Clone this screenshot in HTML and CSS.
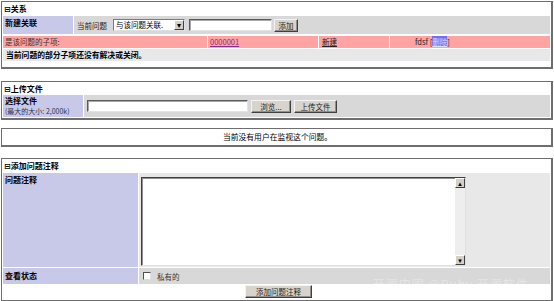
FILE: index.html
```html
<!DOCTYPE html>
<html>
<head>
<meta charset="utf-8">
<link rel="stylesheet" href="styles.css">
</head>
<body>
<div class="box s1">
  <div class="title">⊟关系</div>
  <div class="row r-new">
    <div class="label">新建关联</div>
    <div class="cell gray ctl">
      <span class="cur">当前问题</span>
      <span class="select"><span class="sel-text">与该问题关联.</span><span class="sel-btn">▾</span></span>
      <span class="input w-rel"></span>
      <span class="btn b-addrel">添加</span>
    </div>
  </div>
  <div class="row pink">
    <div class="pc c1">是该问题的子项:</div>
    <div class="pc c2"><span class="lnk">0000001</span></div>
    <div class="pc c3"><span class="lnk2">新建</span></div>
    <div class="pc c4">fdsf [<span class="del">删除</span>]</div>
  </div>
  <div class="row note">当前问题的部分子项还没有解决或关闭。</div>
</div>

<div class="box s2">
  <div class="title">⊟上传文件</div>
  <div class="row r-up">
    <div class="label l2">
      <div class="b">选择文件</div>
      <div class="small">(最大的大小: 2,000k)</div>
    </div>
    <div class="cell gray ctl up">
      <span class="input w-file"></span>
      <span class="btn b-browse">浏览...</span>
      <span class="btn b-upload">上传文件</span>
    </div>
  </div>
</div>

<div class="box s3">
  <div class="monitor">当前没有用户在监视这个问题。</div>
</div>

<div class="box s4">
  <div class="title">⊟添加问题注释</div>
  <div class="row r-note">
    <div class="label l3">问题注释</div>
    <div class="cell light tcell">
      <div class="textarea">
        <div class="sb">
          <span class="arr">▴</span>
          <span class="track"></span>
          <span class="arr">▾</span>
        </div>
      </div>
    </div>
  </div>
  <div class="row r-view">
    <div class="label l3">查看状态</div>
    <div class="cell gray ctl">
      <span class="chk"></span>
      <span class="priv">私有的</span>
    </div>
  </div>
  <div class="row r-btn">
    <span class="btn b-add">添加问题注释</span>
  </div>
  <div class="wm">开源中国 @Ruby  开源软件</div>
</div>
</body>
</html>
```
FILE: styles.css
```css
* { box-sizing: border-box; }
body {
  margin: 0;
  width: 554px;
  height: 301px;
  background: #fff;
  font-family: "Noto Sans CJK SC", "DejaVu Sans", sans-serif;
  font-size: 7.5px;
  color: #000;
  overflow: hidden;
  white-space: nowrap;
}
.box {
  margin: 0 1px;
  border: 1px solid #6e6e6e;
  border-right-width: 2px;
  border-bottom-width: 2px;
  padding: 1px 1px 1px 1px;
  position: relative;
}
.s1 { margin-top: 1px; padding-bottom: 6px; }
.s2 { margin-top: 12px; }
.s3 { margin-top: 8px; }
.s4 { margin-top: 11px; }

.title {
  height: 12px;
  line-height: 12px;
  font-weight: bold;
  font-size: 8px;
  padding-left: 1px;
}
.row { display: flex; }
.label {
  background: #c8c8e8;
  font-weight: bold;
  font-size: 8px;
  padding: 1px 2px;
  line-height: 11px;
}
.cell { flex: 1; }
.gray { background: #d8d8d8; }
.light { background: #e8e8e8; }
.ctl { display: flex; align-items: center; }

.r-new { margin-top: 1px; height: 18px; }
.r-new .label { width: 70px; margin-right: 1px; }
.cur { margin-left: 3px; width: 36px; color: #222; }
.select {
  display: inline-flex;
  width: 72px;
  height: 12px;
  background: #fff;
  border: 1px solid #7a7a7a;
  border-right-color: #e0e0e0;
  border-bottom-color: #e0e0e0;
  align-items: center;
  font-size: 7.5px;
  overflow: hidden;
}
.sel-text { flex: 1; padding-left: 2px; line-height: 10px; }
.sel-btn {
  width: 10px;
  height: 10px;
  flex: none;
  background: #d4d0c8;
  border: 1px solid #fff;
  border-right-color: #404040;
  border-bottom-color: #404040;
  font-size: 8px;
  line-height: 8px;
  text-align: center;
}
.input {
  display: inline-block;
  height: 12px;
  background: #fff;
  border: 1px solid #5a5a5a;
  border-right-color: #e4e4e4;
  border-bottom-color: #e4e4e4;
  box-shadow: inset 1px 1px 0 #a8a8a8;
}
.w-rel { width: 83px; margin-left: 4px; }
.btn {
  display: inline-block;
  height: 13px;
  line-height: 11px;
  padding: 0;
  background: #d8d4cc;
  border: 1px solid #f4f4f4;
  border-right-color: #404040;
  border-bottom-color: #404040;
  box-shadow: inset -1px -1px 0 #909090;
  font-size: 7.5px;
  text-align: center;
  color: #222;
}
.b-addrel { margin-left: 2px; width: 24px; }

.pink {
  margin-top: 2px;
  height: 12px;
  line-height: 12px;
  gap: 1px;
}
.pc { background: #ffa3a3; }
.c1 { width: 204px; padding-left: 2px; color: #333; }
.c2 { width: 110px; padding-left: 2px; }
.c3 { width: 70px; padding-left: 3px; }
.c4 { flex: 1; padding-left: 25px; color: #222; }
.lnk { color: #8a2a8a; text-decoration: underline; }
.lnk2 { color: #222; text-decoration: underline; }
.del { background: #7a6cf0; color: #dcdcff; text-decoration: underline; }

.note {
  margin-top: 1px;
  height: 12px;
  line-height: 12px;
  background: #e8e8e8;
  font-weight: bold;
  font-size: 7.8px;
  padding-left: 3px;
}

.r-up { margin-top: 0px; height: 22px; }
.l2 { width: 80px; margin-right: 1px; padding: 1px 2px; }
.l2 .b { line-height: 10px; }
.small { font-weight: normal; color: #2e3450; line-height: 10px; font-size: 7px; }
.up { padding-left: 3px; }
.w-file { width: 161px; }
.b-browse { margin-left: 3px; width: 40px; }
.b-upload { margin-left: 3px; width: 43px; }

.s3 { height: 19px; }
.monitor { text-align: center; line-height: 14px; padding-left: 2px; font-size: 7.8px; }

.r-note { margin-top: 1px; height: 94px; }
.l3 { width: 135px; margin-right: 1px; }
.tcell { padding: 4px 0 1px 2px; }
.textarea {
  width: 325px;
  height: 89px;
  background: #fff;
  border: 1px solid #404040;
  border-right-color: #e0e0e0;
  border-bottom-color: #e0e0e0;
  box-shadow: inset 1px 1px 0 #909090;
  display: flex;
  justify-content: flex-end;
}
.sb {
  width: 10px;
  display: flex;
  flex-direction: column;
  background: #f0f0f0;
}
.arr {
  width: 10px;
  height: 10px;
  background: #d4d0c8;
  border: 1px solid #fff;
  border-right-color: #404040;
  border-bottom-color: #404040;
  font-size: 7px;
  line-height: 8px;
  text-align: center;
  color: #000;
}
.track { flex: 1; background: #eeeeee; }

.r-view { margin-top: 1px; height: 16px; }
.r-view .label { line-height: 14px; }
.chk {
  display: inline-block;
  width: 8px;
  height: 8px;
  margin-left: 4px;
  background: #fff;
  border: 1px solid #505050;
  border-right-color: #e0e0e0;
  border-bottom-color: #e0e0e0;
}
.priv { margin-left: 6px; color: #333; }

.r-btn { height: 15px; justify-content: center; align-items: center; padding-left: 4px; }
.b-add { width: 67px; }

.wm {
  position: absolute;
  right: 22px;
  bottom: 8px;
  font-size: 12px;
  color: rgba(255,255,255,0.35);
  letter-spacing: 1px;
}
```
